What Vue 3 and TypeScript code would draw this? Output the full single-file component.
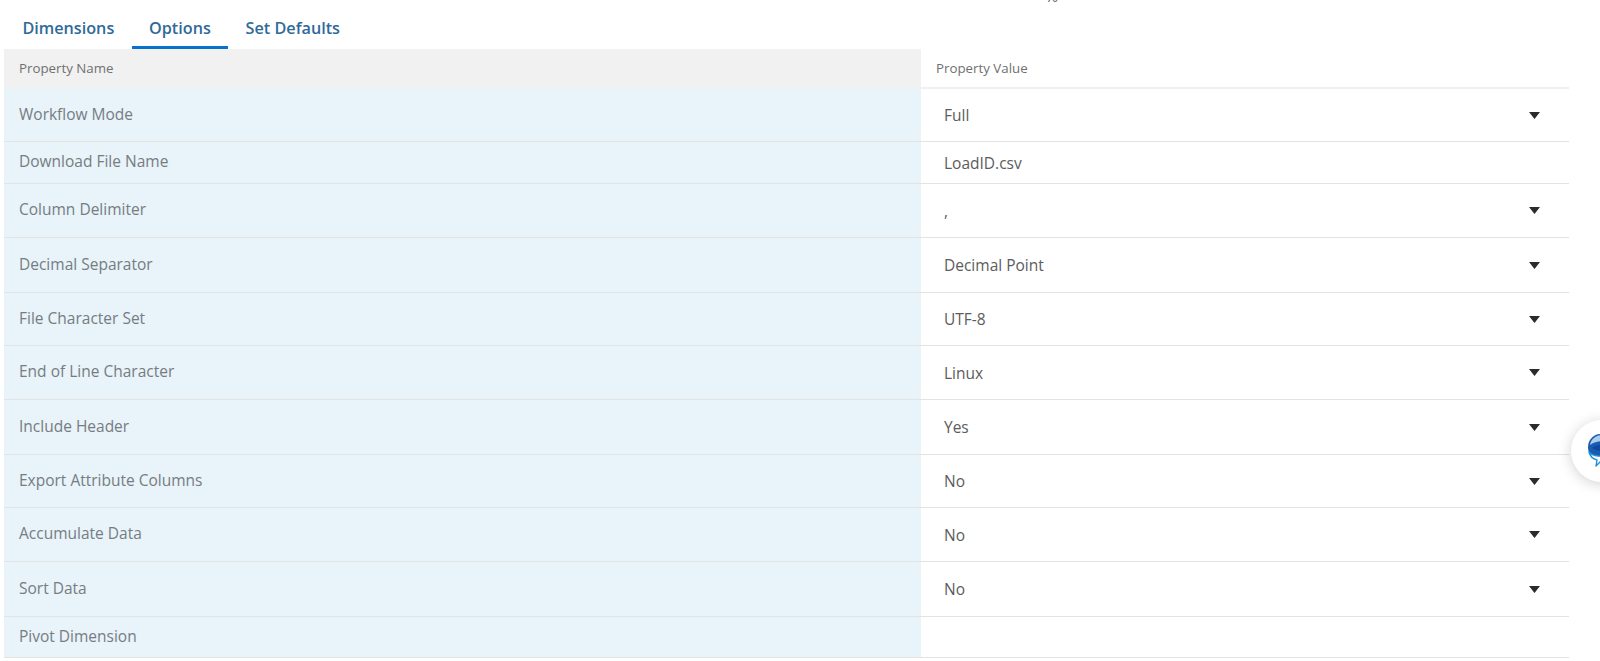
<script setup lang="ts">
interface Row { name: string; value: string; select: boolean; h: number }
const tabs: string[] = ['Dimensions', 'Options', 'Set Defaults']
const rows: Row[] = [
  { name: 'Workflow Mode', value: 'Full', select: true, h: 53 },
  { name: 'Download File Name', value: 'LoadID.csv', select: false, h: 42 },
  { name: 'Column Delimiter', value: ',', select: true, h: 54 },
  { name: 'Decimal Separator', value: 'Decimal Point', select: true, h: 55 },
  { name: 'File Character Set', value: 'UTF-8', select: true, h: 53 },
  { name: 'End of Line Character', value: 'Linux', select: true, h: 54 },
  { name: 'Include Header', value: 'Yes', select: true, h: 55 },
  { name: 'Export Attribute Columns', value: 'No', select: true, h: 53 },
  { name: 'Accumulate Data', value: 'No', select: true, h: 54 },
  { name: 'Sort Data', value: 'No', select: true, h: 55 },
  { name: 'Pivot Dimension', value: '', select: false, h: 41 },
]
</script>

<template>
  <div class="page">
    <nav class="tabs">
      <span v-for="t in tabs" :key="t" class="tab" :class="{ active: t === 'Options' }">{{ t }}</span>
    </nav>
    <div class="table">
      <div class="row head">
        <div class="name">Property Name</div>
        <div class="value">Property Value</div>
      </div>
      <div v-for="r in rows" :key="r.name" class="row" :style="{ height: r.h + 'px' }">
        <div class="name"><span>{{ r.name }}</span></div>
        <div class="value">
          <span class="text">{{ r.value }}</span>
          <svg v-if="r.select" class="caret" width="11" height="7" viewBox="0 0 11 7"><path d="M0 0H11L5.5 7Z" fill="#2b2b2b" /></svg>
        </div>
      </div>
    </div>
    <div class="stray">%</div>
    <div class="chat">
      <svg width="30" height="36" viewBox="0 0 30 36">
        <circle cx="15" cy="14" r="13" fill="#1c5cb0" />
        <path d="M4 12C5 5 11 2 16 2c6 0 11 4 12 10-7-5-17-5-24 0Z" fill="#a8cdee" />
        <path d="M6 15c5-4 14-4 21 0-6 4-15 4-21 0Z" fill="#0b4a9e" />
        <path d="M3 19c3 4 14 6 24 2-3 5-7 7-12 7l-5 5 1-6c-4-1-7-4-8-8Z" fill="#fff" stroke="#1890dc" stroke-width="1.4" stroke-linejoin="round" />
      </svg>
    </div>
  </div>
</template>

<style>
html, body { margin: 0; background: #fff; overflow: hidden; }
</style>

<style scoped>
.page {
  position: relative;
  width: 1600px;
  height: 661px;
  overflow: hidden;
  font-family: "Open Sans", "Noto Sans", sans-serif;
}
.tabs {
  display: flex;
  height: 49px;
  padding-left: 5px;
  box-sizing: border-box;
}
.tab {
  padding: 17px 17.4px 0;
  font-size: 16.2px;
  line-height: 22px;
  font-weight: 600;
  color: #2f6a98;
  box-sizing: border-box;
  height: 49px;
}
.tab.active { border-bottom: 3px solid #0572ce; }
.table { margin-left: 4px; width: 1565px; }
.row {
  display: flex;
  box-sizing: border-box;
  border-bottom: 1px solid #e3e3e3;
}
.row.head {
  height: 40px;
  border-bottom: 2px solid #f0f0f0;
}
.name {
  width: 917px;
  flex: none;
  box-sizing: border-box;
  padding-left: 15px;
  background: #e8f3fa;
  font-size: 15.5px;
  color: #767d81;
  display: flex;
  align-items: center;
  padding-bottom: 3px;
}
.head .name { background: #f1f1f1; font-size: 13.3px; color: #707070; padding-bottom: 0; }
.value {
  flex: 1;
  display: flex;
  align-items: center;
  justify-content: space-between;
  box-sizing: border-box;
  padding-left: 23px;
  padding-right: 29px;
  font-size: 15.5px;
  color: #5c5c5c;
}
.head .value { padding-left: 15px; font-size: 13.3px; color: #707070; }
.caret { flex: none; }
.stray {
  position: absolute;
  left: 1045px;
  top: -15px;
  font-size: 16px;
  color: #666;
}
.chat {
  position: absolute;
  left: 1571px;
  top: 420px;
  width: 62px;
  height: 62px;
  border-radius: 50%;
  background: #fff;
  box-shadow: 0 2px 14px rgba(0, 0, 0, 0.18);
  display: flex;
  align-items: center;
  padding-left: 15px;
  box-sizing: border-box;
}
</style>
